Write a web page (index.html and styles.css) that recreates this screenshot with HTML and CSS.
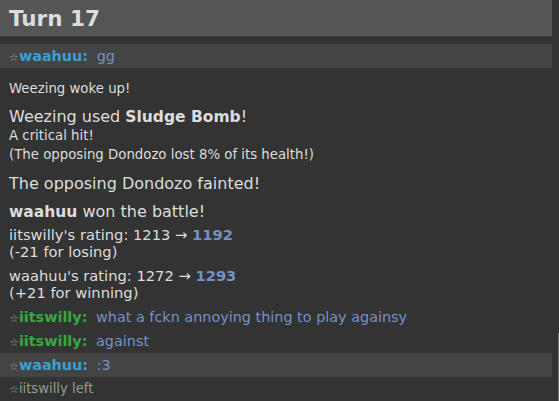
FILE: index.html
```html
<!DOCTYPE html>
<html lang="en">
<head>
    <meta charset="UTF-8">
    <meta name="viewport" content="width=device-width, initial-scale=1.0">
    <title>Battle Log</title>
    <link rel="stylesheet" href="styles.css">
</head>
<body>
    <div class="battle-log">
        <h2 class="turn">Turn 17</h2>

        <div class="chat mine"><span class="rank">&#9734;</span><strong class="name blue">waahuu:</strong> <em>gg</em></div>

        <div class="minor">Weezing woke up!</div>

        <div class="history">
            <div class="big">Weezing used <strong>Sludge Bomb</strong>!</div>
            <div class="small">A critical hit!</div>
            <div class="small">(The opposing Dondozo lost 8% of its health!)</div>
        </div>

        <div class="history">
            <div class="big">The opposing Dondozo fainted!</div>
        </div>

        <div class="history result">
            <div class="big"><strong>waahuu</strong> won the battle!</div>
            <div class="rating">iitswilly's rating: 1213 &rarr; <strong>1192</strong><br>(-21 for losing)</div>
            <div class="rating">waahuu's rating: 1272 &rarr; <strong>1293</strong><br>(+21 for winning)</div>
        </div>

        <div class="chat"><span class="rank">&#9734;</span><strong class="name green">iitswilly:</strong> <em>what a fckn annoying thing to play againsy</em></div>
        <div class="chat"><span class="rank">&#9734;</span><strong class="name green">iitswilly:</strong> <em>against</em></div>
        <div class="chat mine"><span class="rank">&#9734;</span><strong class="name blue">waahuu:</strong> <em>:3</em></div>
        <div class="notice"><span class="rank">&#9734;</span>iitswilly left</div>
    </div>
    <div class="scroll-edge"></div>
</body>
</html>
```

FILE: styles.css
```css
body {
    margin: 0;
    background: #333;
    color: #ddd;
    font-family: "DejaVu Sans", Verdana, sans-serif;
    overflow: hidden;
}

.battle-log {
    width: 552px;
}

.turn {
    margin: 0 0 8px;
    height: 32px;
    padding: 3px 9px 0;
    background: #555;
    border-bottom: 1px solid #606060;
    color: #ddd;
    font-size: 21.5px;
    line-height: 32px;
}

.chat, .notice {
    height: 24px;
    padding: 0 9px;
    font-size: 14.4px;
    line-height: 24px;
    white-space: nowrap;
}

.notice {
    font-size: 13.2px;
    color: #999;
}

.chat.mine {
    background: #444;
}

.rank {
    color: #999;
    font-size: 11px;
}

.name {
    margin-right: 4px;
}

.name.blue {
    color: #3aa0d3;
}

.name.green {
    color: #36a83c;
}

.chat em {
    font-style: normal;
    color: #7591c9;
}

.minor {
    padding: 12px 9px 0;
    font-size: 13.3px;
    line-height: 17px;
}

.history {
    padding: 10px 9px 0;
}

.history.result {
    padding: 8px 9px 4px;
}

.big {
    font-size: 16px;
    line-height: 20px;
}

.big strong {
    font-size: 15.5px;
}

.small {
    font-size: 13.3px;
    line-height: 18.5px;
}

.rating {
    margin-top: 4px;
    font-size: 14.7px;
    line-height: 17px;
}

.rating + .rating {
    margin-top: 7px;
}

.rating strong {
    color: #7591c9;
}

.scroll-edge {
    position: absolute;
    left: 558px;
    top: 333px;
    width: 1px;
    height: 68px;
    background: #6a6a6a;
}
```
